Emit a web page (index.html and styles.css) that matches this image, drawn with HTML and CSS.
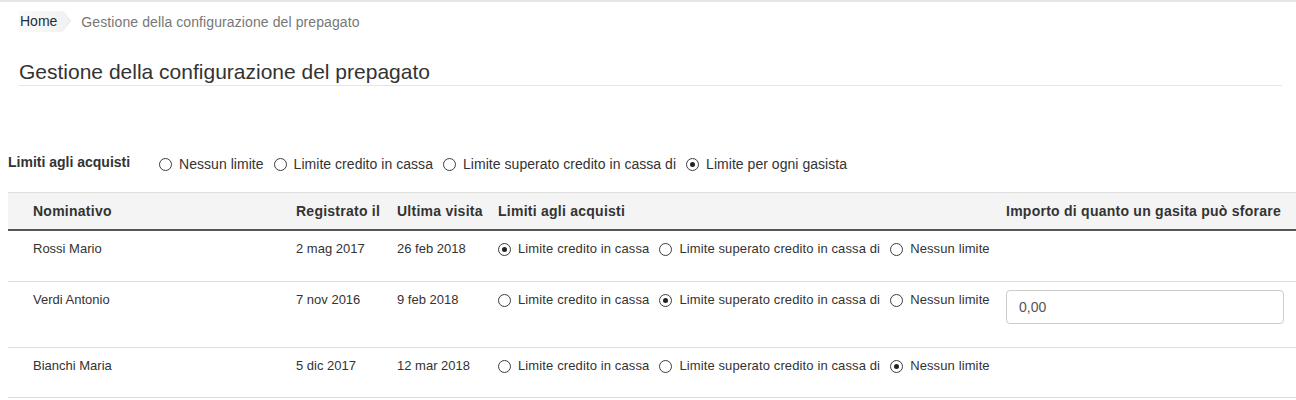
FILE: index.html
```html
<!DOCTYPE html>
<html lang="it">
<head>
<meta charset="utf-8">
<title>Gestione della configurazione del prepagato</title>
<link rel="stylesheet" href="styles.css">
</head>
<body>
<div class="topline"></div>
<nav class="breadcrumb">
  <a class="crumb-home" href="#">Home</a>
  <span class="crumb-current">Gestione della configurazione del prepagato</span>
</nav>
<div class="page-header">
  <h1>Gestione della configurazione del prepagato</h1>
</div>

<div class="filter">
  <span class="filter-label">Limiti agli acquisti</span>
  <div class="radios">
    <label class="radio"><input type="radio" name="global">Nessun limite</label>
    <label class="radio"><input type="radio" name="global">Limite credito in cassa</label>
    <label class="radio"><input type="radio" name="global">Limite superato credito in cassa di</label>
    <label class="radio"><input type="radio" name="global" checked>Limite per ogni gasista</label>
  </div>
</div>

<table class="users">
  <colgroup>
    <col class="c-name"><col class="c-reg"><col class="c-visit"><col class="c-limit"><col class="c-amount">
  </colgroup>
  <thead>
    <tr>
      <th>Nominativo</th>
      <th>Registrato il</th>
      <th>Ultima visita</th>
      <th>Limiti agli acquisti</th>
      <th>Importo di quanto un gasita può sforare</th>
    </tr>
  </thead>
  <tbody>
    <tr>
      <td>Rossi Mario</td>
      <td>2 mag 2017</td>
      <td>26 feb 2018</td>
      <td>
        <div class="radios">
          <label class="radio"><input type="radio" name="u1" checked>Limite credito in cassa</label>
          <label class="radio"><input type="radio" name="u1">Limite superato credito in cassa di</label>
          <label class="radio"><input type="radio" name="u1">Nessun limite</label>
        </div>
      </td>
      <td></td>
    </tr>
    <tr>
      <td>Verdi Antonio</td>
      <td>7 nov 2016</td>
      <td>9 feb 2018</td>
      <td>
        <div class="radios">
          <label class="radio"><input type="radio" name="u2">Limite credito in cassa</label>
          <label class="radio"><input type="radio" name="u2" checked>Limite superato credito in cassa di</label>
          <label class="radio"><input type="radio" name="u2">Nessun limite</label>
        </div>
      </td>
      <td class="amount-cell"><input class="amount" type="text" value="0,00"></td>
    </tr>
    <tr>
      <td>Bianchi Maria</td>
      <td>5 dic 2017</td>
      <td>12 mar 2018</td>
      <td>
        <div class="radios">
          <label class="radio"><input type="radio" name="u3">Limite credito in cassa</label>
          <label class="radio"><input type="radio" name="u3">Limite superato credito in cassa di</label>
          <label class="radio"><input type="radio" name="u3" checked>Nessun limite</label>
        </div>
      </td>
      <td></td>
    </tr>
  </tbody>
</table>
</body>
</html>
```

FILE: styles.css
```css
html, body {
  margin: 0;
  padding: 0;
  background: #fff;
}
body {
  font-family: "Liberation Sans", Arial, sans-serif;
  font-size: 13px;
  line-height: 18px;
  color: #333;
}
.topline {
  height: 0;
  border-top: 2px solid #e6e6e6;
}
.breadcrumb {
  display: flex;
  align-items: center;
  height: 21px;
  margin-top: 9px;
  padding-left: 19px;
  font-size: 14px;
}
.crumb-home {
  position: relative;
  display: inline-block;
  height: 21px;
  line-height: 21px;
  padding: 0 6px 0 1px;
  color: #1f2d3a;
  text-decoration: none;
  background: linear-gradient(to right, #fafafa, #f2f2f2);
}
.crumb-home::after {
  content: "";
  position: absolute;
  top: 0;
  right: -7px;
  width: 0;
  height: 0;
  border-top: 10.5px solid transparent;
  border-bottom: 10.5px solid transparent;
  border-left: 7px solid #f2f2f2;
}
.crumb-home::before {
  content: "";
  position: absolute;
  top: 0;
  right: -8px;
  width: 0;
  height: 0;
  border-top: 10.5px solid transparent;
  border-bottom: 10.5px solid transparent;
  border-left: 8px solid #e2e2e2;
}
.crumb-current {
  margin-left: 18px;
  color: #777;
  letter-spacing: 0.1px;
}
.page-header {
  margin: 27px 14px 0 19px;
  border-bottom: 1px solid #e5e5e5;
}
.page-header h1 {
  margin: 0;
  padding-bottom: 0;
  font-size: 21px;
  line-height: 26px;
  font-weight: normal;
  color: #333;
}
.filter {
  display: flex;
  align-items: center;
  margin-top: 69px;
  padding-left: 8px;
  font-size: 14px;
}
.filter-label {
  width: 151px;
  font-weight: bold;
  position: relative;
  top: -2px;
}
.filter .radio {
  letter-spacing: 0.04px;
}
.radios {
  display: flex;
  flex-wrap: nowrap;
  white-space: nowrap;
}
.radio {
  display: inline-flex;
  align-items: center;
  margin-right: 10px;
  cursor: pointer;
}
.users .radio {
  letter-spacing: 0.12px;
}
.radio input {
  -webkit-appearance: none;
  appearance: none;
  box-sizing: border-box;
  width: 13px;
  height: 13px;
  margin: 0 7px 0 0;
  border: 1px solid #3c3c3c;
  border-radius: 50%;
  background: #fff;
  display: inline-grid;
  place-content: center;
  flex: none;
}
.radio input:checked::before {
  content: "";
  width: 5px;
  height: 5px;
  border-radius: 50%;
  background: #222;
}
.users {
  margin: 19px 0 0 8px;
  width: 1288px;
  border-collapse: collapse;
  table-layout: fixed;
}
.c-name { width: 280px; }
.c-reg { width: 101px; }
.c-visit { width: 101px; }
.c-limit { width: 508px; }
.c-amount { width: 298px; }
.users th {
  background: #f4f4f4;
  border-top: 1px solid #dedede;
  border-bottom: 2px solid #555;
  text-align: left;
  font-size: 14px;
  letter-spacing: 0.25px;
  font-weight: bold;
  color: #333;
  padding: 9px 8px 9px 8px;
  white-space: nowrap;
}
.users td {
  vertical-align: top;
  padding: 9px 8px 23px 8px;
  border-bottom: 1px solid #dedede;
  white-space: nowrap;
}
.users td.amount-cell {
  padding-top: 8px;
  padding-bottom: 23px;
}
.users tbody tr:last-child td {
  padding-bottom: 22px;
}
.users th:first-child,
.users td:first-child {
  padding-left: 25px;
}
.users th:last-child,
.users td:last-child {
  padding-right: 12px;
}
.users td .radios {
  height: 18px;
  align-items: center;
}
.amount {
  box-sizing: border-box;
  display: block;
  width: 100%;
  height: 34px;
  padding: 6px 12px;
  border: 1px solid #ccc;
  border-radius: 4px;
  font-family: inherit;
  font-size: 14px;
  color: #555;
  background: #fff;
}
```
